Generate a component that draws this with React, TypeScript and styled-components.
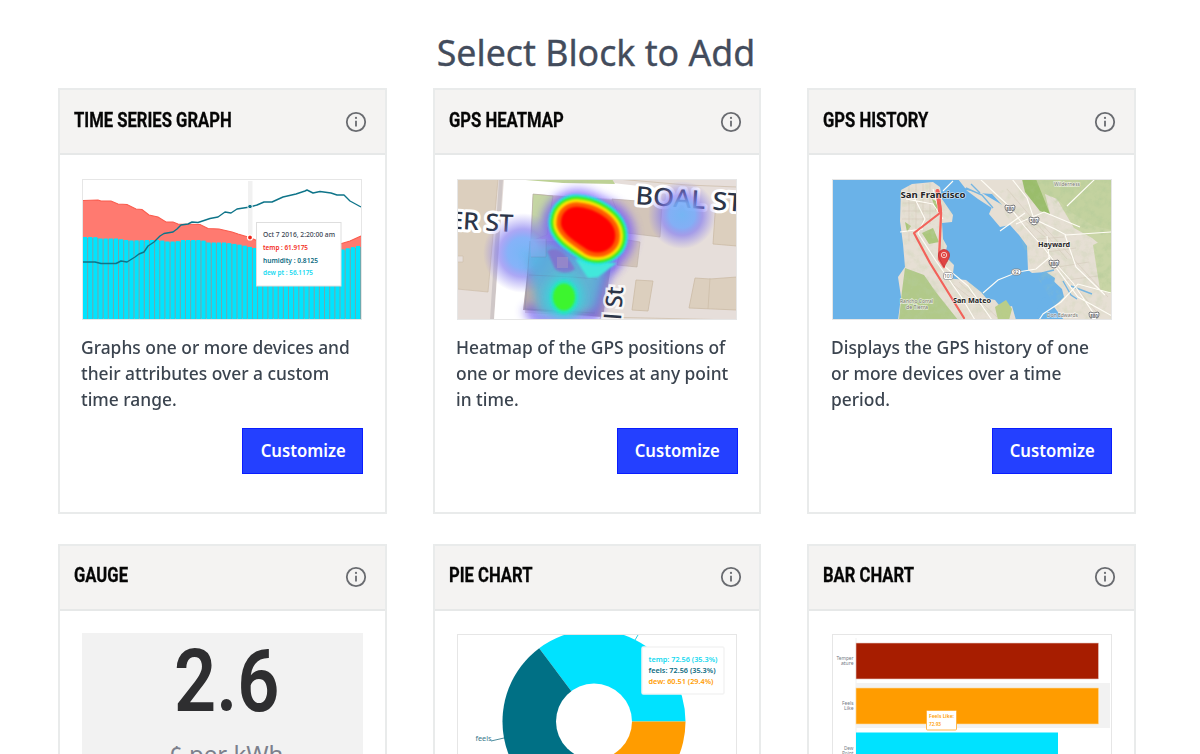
import React from "react";
import styled, { createGlobalStyle } from "styled-components";

const GlobalStyle = createGlobalStyle`
  *, *::before, *::after { box-sizing: border-box; }
  body {
    margin: 0;
    background: #fff;
    font-family: "Noto Sans", "Open Sans", sans-serif;
    color: #3b444f;
  }
`;

const Page = styled.main`
  height: 754px;
  overflow: hidden;
  padding: 26px 64px 0 58px;
`;

const Title = styled.h1<{ $scale: number }>`
  margin: 0;
  height: 62px;
  text-align: center;
  font-size: 36px;
  line-height: 53px;
  font-weight: 400;
  color: #434c5c;
  -webkit-text-stroke: 0.35px #434c5c;
  white-space: nowrap;
  transform: translateX(-1px) scaleX(${(p) => p.$scale});
`;

const Grid = styled.div`
  display: grid;
  grid-template-columns: repeat(3, minmax(0, 1fr));
  gap: 29.6px 46px;
`;

const Card = styled.article`
  height: 426px;
  border: 2px solid #e9ebeb;
  background: #fff;
`;

const CardHeader = styled.header`
  display: flex;
  justify-content: space-between;
  align-items: center;
  height: 65px;
  padding: 0 17.8px 0 14px;
  background: #f4f3f2;
  border-bottom: 2px solid #e6e8e8;
`;

const CardTitle = styled.h2`
  margin: 0 0 4px;
  font: 700 21px/24px Roboto, sans-serif;
  color: #060606;
  white-space: nowrap;
  -webkit-text-stroke: 0.3px #060606;
  transform: scaleX(0.792);
  transform-origin: left;
`;

const CardBody = styled.div`
  display: flex;
  flex-direction: column;
  padding: 23.5px 21.7px 0 22.2px;
`;

const Preview = styled.div`
  height: 141px;
  svg { display: block; width: 280px; height: 141px; }
`;

const Description = styled.p<{ $scale: number }>`
  margin: 14px 0 16.5px -1px;
  font-size: 18.5px;
  line-height: 26px;
  font-weight: 500;
  white-space: pre;
  transform: scaleX(${(p) => p.$scale});
  transform-origin: left;
`;

const Customize = styled.button`
  align-self: flex-end;
  width: 120.5px;
  height: 46px;
  padding: 0;
  border: 1px solid #0a1dff;
  background: #2440ff;
  color: #fff;
  font: 600 18.5px/42px "Noto Sans", sans-serif;
  span { display: inline-block; transform: translateY(-1px) scaleX(0.9); margin: 0 -8px; }
`;

const GaugePanel = styled.div`
  display: flex;
  flex-direction: column;
  align-items: center;
  width: 281px;
  height: 141px;
  margin-top: -1px;
  background: #f2f2f2;
`;

const GaugeValue = styled.div`
  font: 600 88px/96px Roboto, sans-serif;
  color: #2e2e30;
  transform: scaleX(0.84);
  margin-left: 8px;
`;

const GaugeUnit = styled.div`
  margin-left: 7px;
  margin-top: 8px;
  font-size: 24px;
  line-height: 34px;
  color: #7c808c;
`;

const InfoIcon = () => (
  <svg width="22" height="22" viewBox="0 0 22 22" fill="none">
    <circle cx="11" cy="11" r="9.2" stroke="#696b70" strokeWidth="1.8" />
    <path d="M11 9.7V15.5" stroke="#696b70" strokeWidth="1.8" />
    <circle cx="11" cy="6.9" r="1.1" fill="#696b70" />
  </svg>
);

const Label = ({ x, y, w, size, fill, weight = 400, children }: {
  x: number; y: number; w: number; size: number; fill: string; weight?: number; children: string;
}) => (
  <text x={x} y={y} textLength={w} lengthAdjust="spacingAndGlyphs" fontSize={size} fill={fill} fontWeight={weight}>
    {children}
  </text>
);

const Frame = () => <rect x="0.5" y="0.5" width="279" height="140" fill="none" stroke="#e6e6e6" />;

const barCount = 54;
const barTops: [number, number][] = [[0, 58], [13, 58], [16, 59.5], [34, 59.5], [48, 61.5], [65, 61], [78, 61], [84, 62.5], [95, 62.5], [98, 61], [120, 61], [126, 63.5], [143, 63.5], [160, 66], [172, 69], [190, 69], [200, 72], [258, 71], [280, 66]];
const topAt = (x: number) => {
  const i = Math.max(1, barTops.findIndex(([px]) => px >= x));
  const [x0, y0] = barTops[i - 1];
  const [x1, y1] = barTops[i];
  return y0 + ((y1 - y0) * (x - x0)) / (x1 - x0);
};

const TimeSeries = () => (
  <svg viewBox="0 0 280 141">
    <rect x="166" y="2" width="4.5" height="60" fill="#f1f1f1" />
    <path d="M1 21.5L16 21 19 22 29 22 36 25 45 25.5 54 30 60 30.5 67 36 76 38 84 43 91 43 96 45 118 45.5 126 49.5 137 50 150 53 156 55 166 58 176 62 220 70 258 65 268 62 279 57V139H1Z" fill="#ff7a70" />
    <path d="M1 21.5L16 21 19 22 29 22 36 25 45 25.5 54 30 60 30.5 67 36 76 38 84 43 91 43 96 45 118 45.5 126 49.5 137 50 150 53 156 55 166 58 176 62 220 70 258 65 268 62 279 57" fill="none" stroke="#fa5b4d" strokeWidth="1.1" />
    {Array.from({ length: barCount }, (_, i) => {
      const x = 1 + i * 5.15;
      const y = topAt(x + 2);
      return (
        <g key={i}>
          <rect x={x} y={y + 1} width="5.2" height={139 - y} fill="#6fa9ae" />
          <rect x={x} y={y} width="4.1" height={140 - y} fill="#00e4ff" />
        </g>
      );
    })}
    <path d="M1 83L13 83 19 84.5 34 84.5 39 82 45 83 53 78 57 75 62 73 66 67 72 63 78 57 82 54.5 91 53 95 50 99 46 106 45 110 43 116 43.5 128 39.5 136 38 143 33 149 34 155 30 168 28 175 26 182 23 190 23 201 18 214 15 223 12 225 11 228 12.5 231 14 238 12.5 249 14 255 16 262 16 268 22 279 28" fill="none" stroke="#0e7489" strokeWidth="1.4" strokeLinejoin="round" />
    <circle cx="168" cy="27.5" r="2.3" fill="#0e7489" stroke="#fff" />
    <circle cx="168" cy="58.5" r="2.5" fill="#ef2417" stroke="#fff" strokeWidth="1.2" />
    <rect x="174.5" y="43.5" width="84.5" height="63.5" fill="#fff" stroke="#dedede" />
    <Label x={181} y={58} w={72} size={7.2} fill="#3b4452" weight={500}>Oct 7 2016, 2:20:00 am</Label>
    <Label x={181} y={71.2} w={45} size={7.2} fill="#f32b20" weight={600}>temp : 61.9175</Label>
    <Label x={181} y={83.5} w={55} size={7.2} fill="#0b6a7f" weight={600}>humidity : 0.8125</Label>
    <Label x={181} y={95.7} w={50} size={7.2} fill="#13d9f0" weight={600}>dew pt : 56.1175</Label>
    <Frame />
  </svg>
);

/* Heat bands around the main hot spot: colour, and how far each reaches beyond the red core. */
const hotBands: [string, number][] = [["#22e8e8", 25], ["#37ec1c", 20.5], ["#ffe600", 15.5], ["#ff5a00", 9], ["#ff0000", 0]];

const Heatmap = () => (
  <svg viewBox="0 0 280 141">
    <defs>
      <clipPath id="heatClip"><rect x="1" y="1" width="278" height="139" /></clipPath>
      <filter id="soft" filterUnits="userSpaceOnUse" x="-40" y="-60" width="360" height="260"><feGaussianBlur stdDeviation="5" /></filter>
      <filter id="edge" filterUnits="userSpaceOnUse" x="-40" y="-60" width="360" height="260"><feGaussianBlur stdDeviation="1.1" /></filter>
      <radialGradient id="cool">
        <stop offset="0" stopColor="#70b3f5" stopOpacity=".95" />
        <stop offset=".38" stopColor="#78aaf8" stopOpacity=".9" />
        <stop offset=".6" stopColor="#817af0" stopOpacity=".65" />
        <stop offset="1" stopColor="#8d80ef" stopOpacity="0" />
      </radialGradient>
    </defs>
    <g clipPath="url(#heatClip)">
      <rect width="280" height="141" fill="#e6deda" />
      <path d="M0 0H41L31 113 0 110Z" fill="#dccfbe" stroke="#cdbda9" strokeWidth=".7" />
      <path d="M0 77H6V83H0" fill="#e6deda" stroke="#cdbda9" strokeWidth=".6" />
      <path d="M44 0L35 141" stroke="#cfc7c7" strokeWidth="4" />
      <path d="M47 0H120L200 9 190 22 76 15 68 134 143 138 142 141H37Z" fill="#fff" />
      <path d="M56 0H155L158 5 106 4Z" fill="#bdd195" />
      <path d="M76 15L118 18 170 22V70L158 80 74 62Z" fill="#d3c5b9" />
      <path d="M76 15L96 17 90 56 74 62Z" fill="#c5d6a3" stroke="#b3aaa0" strokeWidth=".6" />
      <path d="M74 62L158 62 146 138 66 131Z" fill="#b8aaaa" />
      <path d="M155 20L205 24 203 58 170 54ZM165 60L183 63 180 88 160 86Z" fill="#d3c5b9" stroke="#c2b4a8" strokeWidth=".7" />
      <path d="M259 20L280 22V67L256 65ZM179 101L196 102 191 132 175 131ZM238 99L253 100 280 98V131L232 129Z" fill="#dccfbe" stroke="#cbbba6" strokeWidth=".8" />
      <path d="M253 99L251 130M160 0L230 6 280 8" fill="none" stroke="#cbbba6" strokeWidth=".7" />
      <path d="M143 138L280 141" stroke="#cbbba6" strokeWidth=".7" />
      <g fontWeight="500" fill="#2c3548" stroke="#fff" strokeWidth="6" strokeLinejoin="round" paintOrder="stroke">
        <text x="-8" y="50" textLength="64" lengthAdjust="spacingAndGlyphs" transform="rotate(3 0 49)" fontSize="24">ER ST</text>
        <text x="178" y="25" textLength="107" lengthAdjust="spacingAndGlyphs" transform="rotate(4 178 25)" fontSize="25">BOAL ST</text>
      </g>
      <path d="M121 47L141 56" stroke="#6d50ff" strokeWidth="74" strokeLinecap="round" opacity=".7" filter="url(#soft)" />
      <path d="M158 82L146 100 137 137 80 139 70 128" fill="none" stroke="#654aee" strokeWidth="13" opacity=".65" filter="url(#soft)" />
      <circle cx="66" cy="74" r="40" fill="url(#cool)" />
      <path d="M70 78L90 66 150 88 138 130 112 136H82Z" fill="#4fb4dd" opacity=".8" filter="url(#soft)" />
      <circle cx="225" cy="36" r="34" fill="url(#cool)" />
      <path d="M74 60H89V78H74Z" fill="#91adef" opacity=".4" />
      <path d="M73 62L68 130 138 134M72 96L115 98 140 100M89 60V78H74M107 80V94" fill="none" stroke="#65749b" strokeOpacity=".3" strokeWidth=".8" />
      <path d="M90 72Q104 64 118 90Q108 98 98 90Z" fill="#8175cf" opacity=".95" filter="url(#edge)" />
      <rect x="100" y="78" width="11" height="11" fill="#a995c6" opacity=".5" />
      <ellipse cx="107" cy="118" rx="19" ry="22" fill="#35d9dc" opacity=".8" filter="url(#soft)" />
      <ellipse cx="107" cy="118" rx="14" ry="17" fill="#25e5c0" filter="url(#edge)" />
      <ellipse cx="107" cy="118" rx="11" ry="13.5" fill="#3cf52d" filter="url(#edge)" />
      <path d="M118 80L131 99 141 98 160 84Z" fill="#42e8db" filter="url(#edge)" />
      {hotBands.map(([color, reach]) => (
        <path
          key={color}
          d="M104 42C105 32 113 27 122 28C134 29 146 35 153 43C160 51 160 62 154 68C147 75 136 75 129 70C121 64 102 54 104 42Z"
          fill={color}
          stroke={color}
          strokeWidth={reach}
          strokeLinejoin="round"
          filter="url(#edge)"
        />
      ))}
      <text x="0" y="0" transform="translate(164 141) rotate(-86)" fontSize="23" fontWeight="500" fill="#2c3548" stroke="#fff" strokeOpacity=".8" strokeWidth="5" paintOrder="stroke" textLength="33" lengthAdjust="spacingAndGlyphs">l St</text>
    </g>
    <Frame />
  </svg>
);

const shields: [number, number, string][] = [[178, 30, "880"], [202, 42, "580"], [222, 85, "880"], [262, 137, "880"]];

const GpsHistory = () => (
  <svg viewBox="0 0 280 141">
    <defs>
      <clipPath id="mapClip"><rect x="1" y="1" width="278" height="139" /></clipPath>
      <filter id="terrain" filterUnits="userSpaceOnUse" x="0" y="0" width="280" height="141">
        <feTurbulence type="fractalNoise" baseFrequency=".14" numOctaves="4" seed="8" />
        <feColorMatrix values="0 0 0 0 .46  0 0 0 0 .6  0 0 0 0 .32  3 0 0 0 -1.25" />
        <feComposite in2="SourceGraphic" operator="in" />
      </filter>
    </defs>
    <g clipPath="url(#mapClip)">
      <rect width="280" height="141" fill="#6ab2e8" />
      <path d="M69 11L80 5 101 3 108 8 110 20 121 36 120 43 110 44 111 60 115 67 113 77 122 86 121 94 113 99 134 101 149 113 154 119 163 121 170 130 180 127 184 141H66L69 118 66 98 73 88 71 65 68 42Z" fill="#e6dfd4" />
      <path d="M126 0L133 9 146 14 160 15 170 26 160 28 157 35 168 48 178 46 187 56 195 67 196 91 200 94 214 95 230 110 232 118 222 128 232 141H280V0Z" fill="#e6dfd4" />
      <path d="M134 11L150 14 172 27 163 31 146 20Z" fill="#e6dfd4" />
      <path d="M214 93L223 99 220 115 211 119 204 132 212 138 200 130 200 94" fill="#6ab2e8" />
      <path d="M163 128L174 121 180 130 177 141H166Z" fill="#b9cd88" />
      <path d="M198 0H280V60L263 58 248 48 234 31 225 20 213 15 218 35 208 32 198 18Z" fill="#c3d29f" />
      <path d="M261 66L280 57V115L268 111ZM225 20L240 34 262 47 280 51V75L260 59 242 49Z" fill="#c9d5a6" />
      <path d="M73 89L92 96 103 112 126 141H67L70 112Z" fill="#b1c989" />
      <path d="M90 54L101 49 107 63 97 65ZM73 43L79 47 75 53ZM100 20L108 24 104 32Z" fill="#abc67b" />
      <path d="M190 0H204L218 35 208 32 193 13Z" fill="#9abd6b" />
      <g filter="url(#terrain)" opacity=".5">
        <path d="M200 0H280V60L248 48 220 20ZM262 67L280 59V115L268 111ZM73 89L92 96 126 141H67ZM90 54L101 49 107 63 97 65Z" />
      </g>
      <g filter="url(#terrain)" opacity=".18">
        <path d="M69 11L101 3 110 20 121 36 110 44 113 77 122 86 121 94 134 101 163 121 184 141H126L92 96 73 88ZM160 15L200 0 260 60 280 141H232L200 90 187 56Z" />
      </g>
      <path d="M134 9L150 16 161 29M139 5L148 14M210 94L222 91M231 102L239 116 245 120M239 107L260 115" stroke="#74b5e2" strokeWidth="1.4" fill="none" />
      <g fill="none" stroke="#d0c6b7" strokeWidth=".5">
        <path d="M72 16H106M71 24H106M70 32H104M70 40H98M77 7V62M84 5V55M91 5V49M98 4V45M160 14L213 58M175 10L235 80M194 47L268 137M207 42L276 118M205 60L232 58M215 73L244 69M226 88L257 83M234 101L266 97M118 103L153 130M127 103L165 138" />
      </g>
      <g fill="none" stroke="#fffdf6" strokeWidth="1.1">
        <path d="M111 12L121 2M80 14L93 40 86 54 104 82 130 119 143 141M101 10L108 35 107 68 112 87 136 107 160 141M74 20L101 25 111 40M68 53L91 50" />
        <path d="M148 0L165 16 177 27 193 48 212 69 225 86 241 104 266 141M180 0L195 19 202 40 223 50 234 56 280 53M184 45L212 33 248 48M218 78L204 90 186 93 166 101 151 114M279 114L246 105 229 123 211 135 207 141M215 57L217 79 246 118 280 137M233 56L244 88 273 116M168 52L193 34M263 0L235 27" />
      </g>
      <g fill="none" stroke="#f5514a" strokeLinecap="round" strokeLinejoin="round" opacity=".88">
        <path d="M106 12L108 34 82 54 98 84 132 139" strokeWidth="2.2" />
        <path d="M106 12L109 34 107 80 112 88" strokeWidth="2.4" />
        <path d="M105.5 12L108 32" strokeWidth="4" />
      </g>
      <path d="M112 88C108 81 106.5 79 106.5 76A5.5 5.5 0 0 1 117.5 76C117.5 79 116 81 112 88Z" fill="#e04443" stroke="#b92d34" strokeWidth=".7" />
      <circle cx="112" cy="76" r="2.7" fill="none" stroke="#fbd9d3" strokeWidth=".9" />
      <circle cx="112" cy="76" r=".8" fill="#fff" />
      <g stroke="#fff" strokeWidth="1.3" paintOrder="stroke" strokeOpacity=".65">
        <Label x={68.5} y={18.5} w={65} size={9.2} fill="#252525" weight={700}>San Francisco</Label>
        <Label x={206} y={68} w={32} size={7.4} fill="#252525" weight={700}>Hayward</Label>
        <Label x={121} y={124} w={38} size={7.4} fill="#252525" weight={700}>San Mateo</Label>
        <Label x={222} y={7} w={26} size={5.5} fill="#7c7a74">Wilderness</Label>
        <Label x={68} y={124} w={33} size={5.5} fill="#77746f">Rancho Corral</Label>
        <Label x={74} y={130} w={22} size={5.5} fill="#77746f">de Tierra</Label>
        <Label x={215} y={138} w={31} size={5.5} fill="#77746f">Don Edwards</Label>
      </g>
      {shields.map(([x, y, n], i) => (
        <g key={i}>
          <path d={`M${x - 5} ${y - 3}L${x - 4} ${y - 4} ${x} ${y - 3} ${x + 4} ${y - 4} ${x + 5} ${y - 3}Q${x + 5} ${y + 3} ${x} ${y + 4}Q${x - 5} ${y + 3} ${x - 5} ${y - 3}Z`} fill="#fff" stroke="#6c6c70" strokeWidth=".9" />
          <text x={x} y={y + 1.8} textAnchor="middle" fontSize="4.5" fontWeight="700" fill="#66676c">{n}</text>
        </g>
      ))}
      <rect x="111.5" y="93.5" width="9.5" height="7" rx="2" fill="#fff" stroke="#87878b" strokeWidth=".7" />
      <text x="116.2" y="99" textAnchor="middle" fontSize="5" fill="#555">101</text>
      <rect x="179.5" y="90" width="9.5" height="6" rx="3" fill="#fff" stroke="#777" strokeWidth=".7" />
      <text x="184.2" y="95" textAnchor="middle" fontSize="5" fill="#555">92</text>
    </g>
    <Frame />
  </svg>
);

const PieChart = () => (
  <svg viewBox="0 0 280 141">
    <defs><clipPath id="pieClip"><rect x="1" y="1" width="278" height="140" /></clipPath></defs>
    <g clipPath="url(#pieClip)">
      <path d="M137 87.5H228.5A91.5 91.5 0 0 0 82.2 14.2Z" fill="#00e2ff" />
      <path d="M137 87.5L82.2 14.2A91.5 91.5 0 0 0 111.6 175.4Z" fill="#007085" />
      <path d="M137 87.5L111.6 175.4A91.5 91.5 0 0 0 228.5 87.5Z" fill="#ff9c00" />
      <circle cx="137" cy="87.5" r="38" fill="#fff" />
      <path d="M178 6L181 1" stroke="#15cce1" strokeWidth=".9" />
      <path d="M34 107L47 104" stroke="#397f90" strokeWidth=".9" />
      <Label x={18.5} y={107} w={16} size={7.5} fill="#38798b">feels</Label>
      <rect x="185" y="13" width="82" height="47" rx="1.5" fill="#fff" stroke="#f3f3f3" strokeWidth="1.5" />
      <Label x={191.5} y={27.5} w={69} size={7.3} fill="#13d9f0" weight={600}>temp: 72.56 (35.3%)</Label>
      <Label x={191.5} y={38.8} w={67} size={7.3} fill="#0b6a7f" weight={600}>feels: 72.56 (35.3%)</Label>
      <Label x={191.5} y={50} w={65} size={7.3} fill="#ff9c00" weight={600}>dew: 60.51 (29.4%)</Label>
    </g>
    <Frame />
  </svg>
);

const BarChart = () => (
  <svg viewBox="0 0 280 141">
    <path d="M24 4V141" stroke="#ececec" strokeWidth=".8" />
    <rect x="24" y="49" width="254" height="45" fill="#f2f2f2" />
    <rect x="24" y="9" width="242.5" height="36" fill="#a71d00" stroke="#e6c9c2" strokeWidth=".6" />
    <rect x="24" y="54" width="242.5" height="36" fill="#ff9c00" stroke="#ffd99a" strokeWidth=".6" />
    <rect x="24" y="98.5" width="202" height="36" fill="#00e2ff" />
    <Label x={4.5} y={26} w={17} size={5} fill="#737984">Temper</Label>
    <Label x={9} y={31} w={12.5} size={5} fill="#737984">ature</Label>
    <Label x={10} y={71} w={11.5} size={5} fill="#737984">Feels</Label>
    <Label x={12} y={76} w={9.5} size={5} fill="#737984">Like</Label>
    <Label x={12} y={116} w={9.5} size={5} fill="#737984">Dew</Label>
    <Label x={10} y={121} w={11.5} size={5} fill="#737984">Point</Label>
    <rect x="94.5" y="76.5" width="30" height="19.5" rx="1" fill="#fff" stroke="#ffb13b" strokeWidth=".9" />
    <Label x={97} y={84} w={25} size={5.4} fill="#ff9c00" weight={600}>Feels Like:</Label>
    <Label x={97} y={92} w={12} size={5.4} fill="#ff9c00" weight={600}>72.93</Label>
    <Frame />
  </svg>
);

const Gauge = () => (
  <GaugePanel>
    <GaugeValue>2.6</GaugeValue>
    <GaugeUnit>¢ per kWh</GaugeUnit>
  </GaugePanel>
);

const blocks = [
  { title: "TIME SERIES GRAPH", art: <TimeSeries />, text: "Graphs one or more devices and\ntheir attributes over a custom\ntime range." },
  { title: "GPS HEATMAP", art: <Heatmap />, text: "Heatmap of the GPS positions of\none or more devices at any point\nin time." },
  { title: "GPS HISTORY", art: <GpsHistory />, text: "Displays the GPS history of one\nor more devices over a time\nperiod." },
  { title: "GAUGE", art: <Gauge /> },
  { title: "PIE CHART", art: <PieChart /> },
  { title: "BAR CHART", art: <BarChart /> },
];

export default function App() {
  return (
    <Page>
      <GlobalStyle />
      <Title $scale={0.992}>Select Block to Add</Title>
      <Grid>
        {blocks.map((b) => (
          <Card key={b.title}>
            <CardHeader>
              <CardTitle>{b.title}</CardTitle>
              <InfoIcon />
            </CardHeader>
            <CardBody>
              <Preview>{b.art}</Preview>
              {b.text && (
                <>
                  <Description $scale={0.94}>{b.text}</Description>
                  <Customize><span>Customize</span></Customize>
                </>
              )}
            </CardBody>
          </Card>
        ))}
      </Grid>
    </Page>
  );
}
